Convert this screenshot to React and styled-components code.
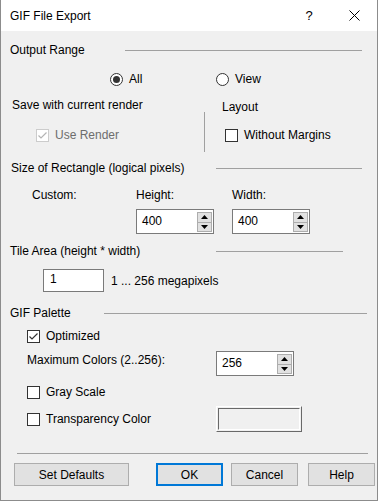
import React from "react";
import styled, { createGlobalStyle } from "styled-components";

const Global = createGlobalStyle`
  html, body { margin: 0; padding: 0; background: #f0f0f0; }
  body { font-family: "Segoe UI", "Liberation Sans", Arial, sans-serif; font-size: 12px; color: #000; }
  * { box-sizing: border-box; }
`;

const Window = styled.div`
  width: 378px;
  height: 501px;
  border: 1px solid #8c8c8c;
  border-top: none;
  background: #f0f0f0;
  display: flex;
  flex-direction: column;
`;

const TitleBar = styled.div`
  height: 31px;
  background: #fff;
  display: flex;
  align-items: center;
  padding-left: 9px;
  flex-shrink: 0;
`;

const TitleText = styled.div`
  flex: 1;
  font-size: 12px;
  line-height: 16px;
`;

const TitleButton = styled.div`
  width: ${(p) => p.$w}px;
  height: 31px;
  display: flex;
  align-items: center;
  justify-content: center;
  font-size: 13px;
`;

const Body = styled.div`
  flex: 1;
  display: flex;
  flex-direction: column;
  padding-top: 11px;
`;

const HeaderRow = styled.div`
  height: 16px;
  display: flex;
  align-items: center;
  padding-left: ${(p) => p.$pl ?? 9}px;
  margin-top: ${(p) => p.$mt ?? 0}px;
  line-height: 16px;
`;

const HeaderLabel = styled.div`
  flex: 1;
  white-space: nowrap;
`;

const HeaderLine = styled.div`
  width: ${(p) => p.$w}px;
  margin-right: ${(p) => p.$mr}px;
  height: 1px;
  background: #a0a0a0;
`;

const RadioRow = styled.div`
  height: 16px;
  margin-top: 13px;
  padding-left: 109px;
  display: flex;
  align-items: center;
`;

const Option = styled.label`
  display: flex;
  align-items: center;
  gap: 6px;
  height: 16px;
  line-height: 16px;
  width: ${(p) => (p.$w ? `${p.$w}px` : "auto")};
  margin-left: ${(p) => p.$ml ?? 0}px;
  color: ${(p) => (p.$disabled ? "#6d6d6d" : "#000")};
  white-space: nowrap;
`;

const RadioCircle = styled.span`
  width: 13px;
  height: 13px;
  border-radius: 50%;
  border: 1px solid #333;
  background: #fff;
  display: flex;
  align-items: center;
  justify-content: center;
  flex-shrink: 0;
  &::after {
    content: "";
    width: 7px;
    height: 7px;
    border-radius: 50%;
    background: ${(p) => (p.$checked ? "#333" : "transparent")};
  }
`;

const CheckBox = styled.span`
  width: 13px;
  height: 13px;
  border: 1px solid ${(p) => (p.$disabled ? "#cccccc" : "#333")};
  background: #fff;
  display: flex;
  align-items: center;
  justify-content: center;
  flex-shrink: 0;
`;

const TwoCols = styled.div`
  margin-top: 10px;
  height: 56px;
  display: grid;
  grid-template-columns: 203px 1px 1fr;
`;

const LeftCol = styled.div`
  padding-left: 11px;
  display: flex;
  flex-direction: column;
`;

const RightCol = styled.div`
  padding-left: 17px;
  padding-top: 2px;
  display: flex;
  flex-direction: column;
`;

const VSep = styled.div`
  margin-top: 15px;
  height: 40px;
  background: #a0a0a0;
`;

const Caption = styled.div`
  height: 16px;
  line-height: 16px;
  white-space: nowrap;
`;

const CheckRow = styled.div`
  margin-top: ${(p) => p.$mt ?? 0}px;
  margin-left: ${(p) => p.$ml ?? 0}px;
  display: flex;
`;

const SizeGrid = styled.div`
  margin-top: 11px;
  padding-left: 31px;
  display: grid;
  grid-template-columns: 104px 96px auto;
  grid-template-rows: 16px 25px;
  row-gap: 6px;
  line-height: 16px;
`;

const SpinBox = styled.div`
  width: 78px;
  height: 25px;
  border: 1px solid #7a7a7a;
  background: #fff;
  display: flex;
  align-items: center;
  padding-left: 5px;
`;

const SpinValue = styled.div`
  flex: 1;
  line-height: 16px;
  margin-top: -1px;
`;

const SpinButtons = styled.div`
  align-self: stretch;
  width: 16px;
  padding: 2px 1px 1px 0;
  display: flex;
  flex-direction: column;
`;

const SpinBtn = styled.div`
  flex: 1;
  background: #e1e1e1;
  border: 1px solid #adadad;
  margin-top: ${(p) => (p.$down ? "-1px" : "0")};
  display: flex;
  align-items: center;
  justify-content: center;
`;

const TileRow = styled.div`
  margin-top: 10px;
  padding-left: 42px;
  display: flex;
  align-items: center;
  gap: 7px;
  height: 23px;
`;

const TextInput = styled.div`
  width: 61px;
  height: 23px;
  border: 1px solid #7a7a7a;
  background: #fff;
  padding-left: 6px;
  line-height: 19px;
`;

const PaletteRow = styled.div`
  margin-top: ${(p) => p.$mt ?? 0}px;
  padding-left: 26px;
  display: grid;
  grid-template-columns: 189px auto;
  align-items: ${(p) => p.$align ?? "center"};
  min-height: 16px;
`;

const PaletteLabel = styled.div`
  line-height: 16px;
  margin-top: ${(p) => p.$mt ?? 0}px;
`;

const ColorFrame = styled.div`
  width: 86px;
  height: 26px;
  border: 1px solid;
  border-color: #ffffff #696969 #696969 #ffffff;
  padding: 1px;
`;

const ColorInner = styled.div`
  width: 100%;
  height: 100%;
  border: 1px solid;
  border-color: #696969 #ffffff #ffffff #696969;
  background: #f0f0f0;
`;

const BottomSep = styled.div`
  margin: 21px 9px 0 16px;
  height: 1px;
  background: #a0a0a0;
`;

const ButtonRow = styled.div`
  margin-top: 9px;
  padding-left: 13px;
  display: flex;
  height: 23px;
`;

const Button = styled.div`
  width: ${(p) => p.$w}px;
  margin-left: ${(p) => p.$ml ?? 0}px;
  height: 23px;
  background: #e1e1e1;
  border: ${(p) => (p.$default ? "2px solid #0078d7" : "1px solid #adadad")};
  display: flex;
  align-items: center;
  justify-content: center;
  line-height: 16px;
`;

const Check = ({ color = "#333" }) => (
  <svg width="11" height="11" viewBox="0 0 11 11">
    <path d="M1.5 5.5 L4 8 L9.5 2.5" fill="none" stroke={color} strokeWidth="1.2" />
  </svg>
);

const Tri = ({ down }) => (
  <svg width="7" height="4" viewBox="0 0 7 4">
    {down ? <path d="M0 0 H7 L3.5 4 Z" fill="#000" /> : <path d="M0 4 H7 L3.5 0 Z" fill="#000" />}
  </svg>
);

const Spin = ({ value }) => (
  <SpinBox>
    <SpinValue>{value}</SpinValue>
    <SpinButtons>
      <SpinBtn>
        <Tri />
      </SpinBtn>
      <SpinBtn $down>
        <Tri down />
      </SpinBtn>
    </SpinButtons>
  </SpinBox>
);

const CheckOption = ({ checked, disabled, children }) => (
  <Option $disabled={disabled}>
    <CheckBox $disabled={disabled}>{checked && <Check color={disabled ? "#b4b4b4" : "#333"} />}</CheckBox>
    {children}
  </Option>
);

export default function App() {
  return (
    <>
      <Global />
      <Window>
        <TitleBar>
          <TitleText>GIF File Export</TitleText>
          <TitleButton $w={46}>?</TitleButton>
          <TitleButton $w={45}>
            <svg width="11" height="11" viewBox="0 0 11 11">
              <path d="M0.5 0.5 L10.5 10.5 M10.5 0.5 L0.5 10.5" stroke="#000" strokeWidth="1" />
            </svg>
          </TitleButton>
        </TitleBar>
        <Body>
          <HeaderRow>
            <HeaderLabel>Output Range</HeaderLabel>
            <HeaderLine $w={237} $mr={15} />
          </HeaderRow>
          <RadioRow>
            <Option $w={106}>
              <RadioCircle $checked />
              All
            </Option>
            <Option>
              <RadioCircle />
              View
            </Option>
          </RadioRow>
          <TwoCols>
            <LeftCol>
              <Caption>Save with current render</Caption>
              <CheckRow $mt={14} $ml={24}>
                <CheckOption checked disabled>
                  Use Render
                </CheckOption>
              </CheckRow>
            </LeftCol>
            <VSep />
            <RightCol>
              <Caption>Layout</Caption>
              <CheckRow $mt={12} $ml={3}>
                <CheckOption>Without Margins</CheckOption>
              </CheckRow>
            </RightCol>
          </TwoCols>
          <HeaderRow $mt={7} $pl={10}>
            <HeaderLabel>Size of Rectangle (logical pixels)</HeaderLabel>
            <HeaderLine $w={146} $mr={15} />
          </HeaderRow>
          <SizeGrid>
            <div>Custom:</div>
            <div>Height:</div>
            <div>Width:</div>
            <div />
            <Spin value="400" />
            <Spin value="400" />
          </SizeGrid>
          <HeaderRow $mt={9}>
            <HeaderLabel>Tile Area (height * width)</HeaderLabel>
            <HeaderLine $w={127} $mr={34} />
          </HeaderRow>
          <TileRow>
            <TextInput>1</TextInput>
            <span>1 ... 256 megapixels</span>
          </TileRow>
          <HeaderRow $mt={13}>
            <HeaderLabel>GIF Palette</HeaderLabel>
            <HeaderLine $w={263} $mr={10} />
          </HeaderRow>
          <PaletteRow $mt={7}>
            <CheckOption checked>Optimized</CheckOption>
          </PaletteRow>
          <PaletteRow $mt={7} $align="start">
            <PaletteLabel $mt={1}>Maximum Colors (2..256):</PaletteLabel>
            <Spin value="256" />
          </PaletteRow>
          <PaletteRow $mt={8}>
            <CheckOption>Gray Scale</CheckOption>
          </PaletteRow>
          <PaletteRow $mt={6}>
            <CheckOption>Transparency Color</CheckOption>
            <ColorFrame>
              <ColorInner />
            </ColorFrame>
          </PaletteRow>
          <BottomSep />
          <ButtonRow>
            <Button $w={115}>Set Defaults</Button>
            <Button $w={67} $ml={27} $default>
              OK
            </Button>
            <Button $w={67} $ml={8}>
              Cancel
            </Button>
            <Button $w={67} $ml={10}>
              Help
            </Button>
          </ButtonRow>
        </Body>
      </Window>
    </>
  );
}
